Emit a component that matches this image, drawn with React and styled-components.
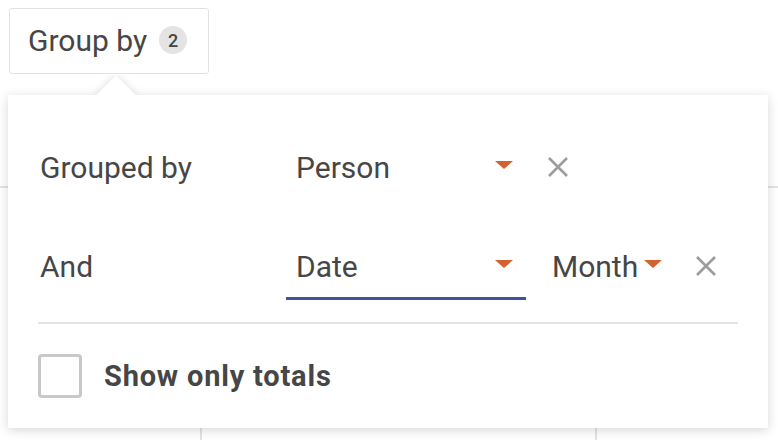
import React from "react";
import styled, { createGlobalStyle } from "styled-components";

const GlobalStyle = createGlobalStyle`
    html, body {
        margin: 0;
        padding: 0;
        background: #fff;
        font-family: Roboto, "Noto Sans", sans-serif;
        color: #464646;
    }
`;

const Page = styled.div`
    width: 778px;
    height: 440px;
    overflow: hidden;
    position: relative;
`;

const Toolbar = styled.div`
    height: 74px;
    padding: 8px 0 0 9px;
    box-sizing: border-box;
`;

const Anchor = styled.div`
    position: relative;
    display: inline-block;
    z-index: 2;
`;

const GroupButton = styled.button`
    display: flex;
    align-items: center;
    gap: 12px;
    width: 200px;
    height: 66px;
    padding: 0 0 2px 18px;
    box-sizing: border-box;
    background: #fff;
    border: 1px solid #e2e2e2;
    border-radius: 3px;
    font-family: inherit;
    font-size: 30px;
    color: #464646;
    cursor: pointer;
`;

const Badge = styled.span`
    display: inline-flex;
    align-items: center;
    justify-content: center;
    width: 28px;
    height: 28px;
    border-radius: 50%;
    background: #e4e4e4;
    font-size: 18px;
    font-weight: 500;
    color: #444;
`;

const Table = styled.div`
    display: flex;
    flex-direction: column;
`;

const HeaderRow = styled.div`
    height: 112px;
    border-bottom: 2px solid #e3e3e3;
`;

const BodyRow = styled.div`
    display: grid;
    grid-template-columns: 202px 395px 1fr;
    height: 260px;
`;

const Cell = styled.div`
    border-right: ${(p) => (p.last ? "none" : "2px solid #e3e3e3")};
`;

const Popover = styled.div`
    position: absolute;
    top: 87px;
    left: -1px;
    width: 760px;
    box-sizing: border-box;
    padding: 38px 30px 30px;
    background: #fff;
    box-shadow: 0 2px 10px rgba(0, 0, 0, 0.16);
`;

const ArrowClip = styled.div`
    position: absolute;
    top: -20px;
    left: 80px;
    width: 56px;
    height: 20px;
    overflow: hidden;
`;

const ArrowTip = styled.div`
    position: absolute;
    left: 14px;
    top: 6px;
    width: 28px;
    height: 28px;
    background: #fff;
    transform: rotate(45deg);
    box-shadow: 0 0 8px rgba(0, 0, 0, 0.14);
`;

const Row = styled.div`
    display: flex;
    align-items: center;
    height: 68px;
    margin-bottom: ${(p) => (p.last ? "22px" : "31px")};
`;

const Label = styled.div`
    width: 248px;
    padding-left: 2px;
    box-sizing: border-box;
    font-size: 30px;
`;

const Select = styled.div`
    display: flex;
    align-items: center;
    justify-content: ${(p) => (p.compact ? "flex-start" : "space-between")};
    gap: 6px;
    width: ${(p) => p.width}px;
    height: 68px;
    box-sizing: border-box;
    padding: 3px ${(p) => p.padRight}px 0 10px;
    border-bottom: 3px solid ${(p) => (p.active ? "#3f51a5" : "transparent")};
    font-size: 30px;
`;

const Caret = styled.span`
    width: 0;
    height: 0;
    border-left: 9.5px solid transparent;
    border-right: 9.5px solid transparent;
    border-top: 8px solid #d4612e;
    margin-top: -4px;
`;

const ClearButton = styled.button`
    display: flex;
    align-items: center;
    justify-content: center;
    margin-left: ${(p) => p.offset}px;
    padding: 0;
    border: none;
    background: none;
    cursor: pointer;
`;

const Divider = styled.div`
    height: 2px;
    background: #e4e4e4;
`;

const CheckRow = styled.label`
    display: flex;
    align-items: center;
    gap: 22px;
    margin-top: 30px;
    font-size: 29px;
    font-weight: 700;
    letter-spacing: 0.8px;
    cursor: pointer;
`;

const Checkbox = styled.span`
    width: 44px;
    height: 44px;
    box-sizing: border-box;
    border: 3px solid #c8c8c8;
    border-radius: 4px;
`;

function CloseIcon() {
    return (
        <svg width="22" height="22" viewBox="0 0 22 22">
            <path d="M2 2 L20 20 M20 2 L2 20" stroke="#9c9c9c" strokeWidth="2.6" fill="none" />
        </svg>
    );
}

export default function App() {
    return (
        <Page>
            <GlobalStyle />
            <Toolbar>
                <Anchor>
                    <GroupButton>
                        Group by <Badge>2</Badge>
                    </GroupButton>

                    <Popover>
                        <ArrowClip>
                            <ArrowTip />
                        </ArrowClip>

                        <Row>
                            <Label>Grouped by</Label>
                            <Select width={240} padRight={13}>
                                Person <Caret />
                            </Select>
                            <ClearButton offset={21}>
                                <CloseIcon />
                            </ClearButton>
                        </Row>

                        <Row last>
                            <Label>And</Label>
                            <Select width={240} padRight={13} active>
                                Date <Caret />
                            </Select>
                            <Select width={140} padRight={0} compact style={{ marginLeft: 16 }}>
                                Month <Caret />
                            </Select>
                            <ClearButton offset={13}>
                                <CloseIcon />
                            </ClearButton>
                        </Row>

                        <Divider />

                        <CheckRow>
                            <Checkbox />
                            Show only totals
                        </CheckRow>
                    </Popover>
                </Anchor>
            </Toolbar>

            <Table>
                <HeaderRow />
                <BodyRow>
                    <Cell />
                    <Cell />
                    <Cell last />
                </BodyRow>
            </Table>
        </Page>
    );
}
